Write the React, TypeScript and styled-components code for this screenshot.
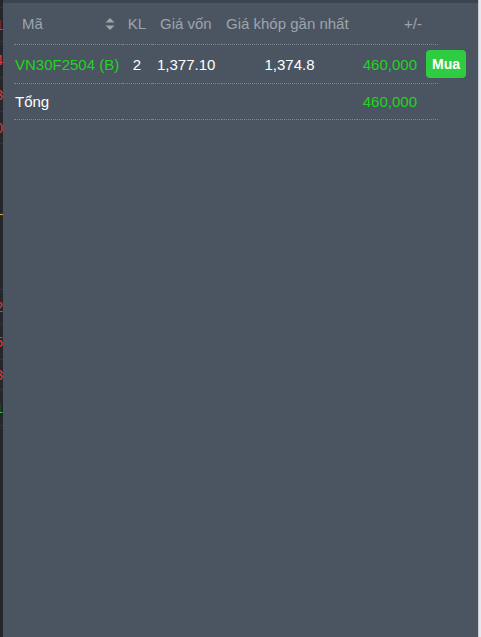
import React from "react";
import styled, { createGlobalStyle } from "styled-components";

const Global = createGlobalStyle`
  html, body { margin: 0; padding: 0; background: #4b5561; }
  body { font-family: "Liberation Sans", Arial, sans-serif; }
`;

const Page = styled.div`
  display: flex;
  width: 481px;
  height: 637px;
  overflow: hidden;
`;

const LeftEdge = styled.div`
  width: 3px;
  flex: none;
  background: #23272c;
  overflow: hidden;
  display: flex;
  flex-direction: column;
`;

const EdgeMark = styled.div<{ $h: number; $color: string; $bar?: boolean }>`
  height: ${(p) => p.$h}px;
  flex: none;
  display: flex;
  align-items: center;
  justify-content: flex-end;
  color: ${(p) => p.$color};
  background: ${(p) => (p.$bar ? p.$color : "transparent")};
  font-size: 14px;
  white-space: nowrap;
  border-bottom: 1px solid #2f3439;
  box-sizing: border-box;
`;

const Panel = styled.div`
  flex: 1;
  background: #4b5561;
  border-top: 3px solid #3b4450;
`;

const RightEdge = styled.div`
  width: 3px;
  flex: none;
  background: #e6e8ec;
  border-left: 1px solid #c9cdd3;
  box-sizing: border-box;
`;

const Table = styled.div`
  margin-left: 11px;
  display: grid;
  grid-template-columns: 108px 30px 70px 135px 81px 34px;
  font-size: 15px;
`;

const Cell = styled.div<{
  $h: number;
  $align?: "left" | "center" | "right";
  $pl?: number;
  $pr?: number;
  $color?: string;
  $noBorder?: boolean;
}>`
  height: ${(p) => p.$h}px;
  display: flex;
  align-items: center;
  justify-content: ${(p) =>
    p.$align === "center" ? "center" : p.$align === "right" ? "flex-end" : "flex-start"};
  padding-left: ${(p) => p.$pl ?? 0}px;
  padding-right: ${(p) => p.$pr ?? 0}px;
  color: ${(p) => p.$color ?? "#ffffff"};
  border-bottom: ${(p) => (p.$noBorder ? "1px solid transparent" : "1px dotted #7e8690")};
  white-space: nowrap;
  box-sizing: content-box;
`;

const HeadCell = styled(Cell).attrs({ $h: 41, $color: "#9ea4aa" })``;

const SortIcon = styled.svg`
  margin-left: auto;
  margin-right: 7px;
`;

const BuyButton = styled.button`
  margin-left: -12px;
  width: 40px;
  height: 28px;
  border: none;
  border-radius: 4px;
  background: #2ecc40;
  color: #ffffff;
  font-family: "Liberation Sans", Arial, sans-serif;
  font-weight: bold;
  font-size: 14px;
  padding: 0;
  cursor: pointer;
`;

const GREEN = "#22d322";
const RED = "#e03a3a";

const edge = [
  { h: 8, c: RED, t: "" },
  { h: 34, c: RED, t: "1" },
  { h: 36, c: RED, t: "4" },
  { h: 34, c: RED, t: "3" },
  { h: 32, c: RED, t: "0" },
  { h: 70, c: RED, t: "" },
  { h: 2, c: "#d89a48", t: "", bar: true },
  { h: 74, c: RED, t: "" },
  { h: 34, c: RED, t: "2" },
  { h: 36, c: RED, t: "5" },
  { h: 30, c: RED, t: "3" },
  { h: 36, c: "#22cc22", t: "1" },
];

export default function App() {
  return (
    <>
      <Global />
      <Page>
        <LeftEdge>
          {edge.map((e, i) => (
            <EdgeMark key={i} $h={e.h} $color={e.c} $bar={e.bar}>
              {e.t}
            </EdgeMark>
          ))}
        </LeftEdge>
        <Panel>
          <Table>
            <HeadCell $pl={8}>
              Mã
              <SortIcon width="10" height="12" viewBox="0 0 10 12">
                <path d="M5 0 L9.5 4.5 H0.5 Z" fill="#9ea4aa" />
                <path d="M5 12 L9.5 7.5 H0.5 Z" fill="#9ea4aa" />
              </SortIcon>
            </HeadCell>
            <HeadCell $align="center">KL</HeadCell>
            <HeadCell $pl={8}>Giá vốn</HeadCell>
            <HeadCell $pl={4}>Giá khóp gần nhất</HeadCell>
            <HeadCell $align="right" $pr={16}>+/-</HeadCell>
            <HeadCell $noBorder />

            <Cell $h={38} $pl={1} $color={GREEN}>VN30F2504 (B)</Cell>
            <Cell $h={38} $align="center">2</Cell>
            <Cell $h={38} $pl={5}>1,377.10</Cell>
            <Cell $h={38} $align="center">1,374.8</Cell>
            <Cell $h={38} $align="right" $pr={21} $color={GREEN}>460,000</Cell>
            <Cell $h={38} $noBorder>
              <BuyButton>Mua</BuyButton>
            </Cell>

            <Cell $h={35} $pl={1}>Tổng</Cell>
            <Cell $h={35} />
            <Cell $h={35} />
            <Cell $h={35} />
            <Cell $h={35} $align="right" $pr={21} $color={GREEN}>460,000</Cell>
            <Cell $h={35} $noBorder />
          </Table>
        </Panel>
        <RightEdge />
      </Page>
    </>
  );
}
